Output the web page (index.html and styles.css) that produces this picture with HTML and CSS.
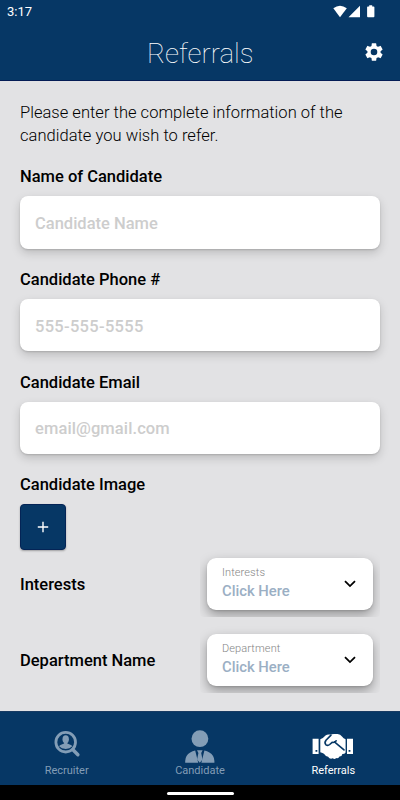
FILE: index.html
```html
<!DOCTYPE html>
<html lang="en">
<head>
<meta charset="utf-8">
<title>Referrals</title>
<link rel="stylesheet" href="styles.css">
</head>
<body>
<div class="app">
  <div class="status">
    <span>3:17</span>
    <svg class="status-icons" width="42" height="14" viewBox="0 0 42 14" fill="#fff"><path d="M0.3 3.2Q7 -1.9 13.8 3.2L7 12.2z"/><path d="M15.5 12.2 27 0.8v11.4z"/><path d="M36.2.2h3v1.3h1.4q.8 0 .8.8v9q0 1-.8 1h-5.6q-.9 0-.9-1v-9q0-.8.8-.8h1.3z"/></svg>
  </div>
  <header class="header">
    <h1>Referrals</h1>
    <svg class="gear" width="22" height="22" viewBox="0 0 24 24" fill="#fff"><path d="M19.14 12.94c.04-.3.06-.61.06-.94s-.02-.64-.07-.94l2.03-1.58a.49.49 0 0 0 .12-.61l-1.92-3.32a.488.488 0 0 0-.59-.22l-2.39.96c-.5-.38-1.03-.7-1.62-.94l-.36-2.54a.484.484 0 0 0-.48-.41h-3.84c-.24 0-.43.17-.47.41l-.36 2.54c-.59.24-1.13.57-1.62.94l-2.39-.96a.48.48 0 0 0-.59.22L2.74 8.87c-.12.21-.08.47.12.61l2.03 1.58c-.05.3-.09.63-.09.94s.02.64.07.94l-2.03 1.58a.49.49 0 0 0-.12.61l1.92 3.32c.12.22.37.29.59.22l2.39-.96c.5.38 1.03.7 1.62.94l.36 2.54c.05.24.24.41.48.41h3.84c.24 0 .44-.17.47-.41l.36-2.54c.59-.24 1.13-.56 1.62-.94l2.39.96c.22.08.47 0 .59-.22l1.92-3.32a.48.48 0 0 0-.12-.61zM12 15.6A3.6 3.6 0 1 1 12 8.4a3.6 3.6 0 0 1 0 7.2z"/></svg>
  </header>
  <main class="form">
    <p class="intro">Please enter the complete information of the candidate you wish to refer.</p>
    <label class="label" for="name">Name of Candidate</label>
    <input class="input" id="name" placeholder="Candidate Name">
    <label class="label" for="phone">Candidate Phone #</label>
    <input class="input phone" id="phone" placeholder="555-555-5555">
    <label class="label" for="email">Candidate Email</label>
    <input class="input email" id="email" placeholder="email@gmail.com">
    <div class="label">Candidate Image</div>
    <button class="add" aria-label="Add"><svg width="12" height="12" viewBox="0 0 12 12" stroke="#fff" stroke-width="1.4"><path d="M6 .8v10.4M.8 6h10.4"/></svg></button>
    <div class="row">
      <span class="row-label">Interests</span>
      <div class="shade"><div class="select">
        <div><div class="hint">Interests</div><div class="value">Click Here</div></div>
        <svg width="12" height="8" viewBox="0 0 12 8" fill="none" stroke="#000" stroke-width="1.8"><path d="M1 1.2l5 4.9 5-4.9"/></svg>
      </div></div>
    </div>
    <div class="row">
      <span class="row-label">Department Name</span>
      <div class="shade"><div class="select">
        <div><div class="hint">Department</div><div class="value">Click Here</div></div>
        <svg width="12" height="8" viewBox="0 0 12 8" fill="none" stroke="#000" stroke-width="1.8"><path d="M1 1.2l5 4.9 5-4.9"/></svg>
      </div></div>
    </div>
  </main>
  <nav class="tabs">
    <div class="tab">
      <svg width="42" height="36" viewBox="0 0 42 36" fill="#839db6"><circle cx="19.7" cy="15.2" r="9.8" fill="none" stroke="#839db6" stroke-width="2.8"/><path d="M26.7 22.5l5.2 5.3" fill="none" stroke="#839db6" stroke-width="3.4" stroke-linecap="round"/><ellipse cx="19.7" cy="12.2" rx="3.2" ry="4"/><path d="M18.1 14h3.2v2.6l3.6 1.3q1.5.6 1.4 1.4-2.4 2.6-6.6 2.6t-6.6-2.6q0-.8 1.4-1.4l3.6-1.3z"/></svg>
      <span>Recruiter</span>
    </div>
    <div class="tab">
      <svg width="42" height="36" viewBox="0 0 42 36" fill="#839db6"><circle cx="20.9" cy="11.7" r="8.4"/><path d="M6.2 35.7V34q.2-6 5-8.6 2.2-1.3 5-1.8l3 12.1zM35.4 35.7V34q-.2-6-5-8.6-2.2-1.3-5-1.8l-3 12.1z"/><path d="M18 23.3h5.6L22.2 26l1.3 6.5-2.7 3.2-2.7-3.2 1.3-6.5z"/></svg>
      <span>Candidate</span>
    </div>
    <div class="tab active">
      <svg width="42" height="36" viewBox="0 0 42 36" fill="#fff"><path fill-rule="evenodd" d="M.6 11.8h6v15.1h-6zM3.5 22.9v1.8h1.8v-1.8zM35 11.8h6v15.1h-6zM36.6 22.9v1.8h1.8v-1.8z"/><path d="M8.3 12.3Q11.5 11 13.5 8.5 15.5 7 18 7.6q1.8-.6 4-.6h3.6q2.8.2 4.4 2.5 1.5 2 3.6 2.7v13.2q-1 1.8-3.2 1.7-.4 2.5-2.9 2.5-1 2.2-3.3 1.4-1.6 1.6-3.4.3-3 1.2-4.7-1.5-2.6-.5-4.2-3-1-.9-3.6-1.5z"/><path d="M19 8.1l-5 5.2q-2 2.7 0 4.5 1.8 1.3 3.7-.3l2.4-2.2q2.5.6 4.1-1.5M22.4 14.8l9.6 8.1" fill="none" stroke="#063765" stroke-width="1.6" stroke-linecap="round"/></svg>
      <span>Referrals</span>
    </div>
  </nav>
  <div class="home"><div class="pill"></div></div>
</div>
</body>
</html>
```
FILE: styles.css
```css
* { box-sizing: border-box; }
body { margin: 0; font-family: Roboto, sans-serif; color: #000; }
.app { width: 400px; height: 800px; display: flex; flex-direction: column; overflow: hidden; background: #e2e2e4; }
.status { height: 24px; flex: none; background: #063765; color: #fff; display: flex; justify-content: space-between; padding: 0 25px 0 7px; font-size: 13px; line-height: 24px; }
.status-icons { margin-top: 5px; }
.header { height: 57px; flex: none; background: #063765; border-bottom: 1px solid #041c55; display: grid; grid-template-columns: 1fr 106px 1fr; align-items: center; }
.header h1 { grid-column: 2; margin: 3px 0 0; font-size: 27.7px; line-height: 36px; font-weight: 100; color: #fff; white-space: nowrap; }
.gear { justify-self: end; margin-right: 15px; }
.form { flex: 1; min-height: 0; padding: 20px 20px 0; }
.intro { margin: 0; font-size: 16.5px; line-height: 23px; font-weight: 300; letter-spacing: .03px; }
.label { display: block; font-size: 16.5px; font-weight: 500; line-height: 20px; margin: 20.4px 0 9px; }
.input { display: block; width: 100%; height: 52.5px; border: 0; border-radius: 8px; padding: 2px 15px 0; background: #fff; font: 500 16.5px Roboto, sans-serif; box-shadow: 0 4px 10px rgba(0,0,0,.17), 0 1px 2px rgba(0,0,0,.14); margin-bottom: 21.1px; }
.input::placeholder { color: #cdcdcd; opacity: 1; }
.phone { letter-spacing: .3px; }
.email { letter-spacing: .1px; }
.add { display: flex; align-items: center; justify-content: center; width: 46px; height: 46px; border: 1px solid #042456; border-radius: 4px; background: #063765; box-shadow: 0 1px 2px rgba(0,0,0,.3); padding: 0; }
.row { display: flex; align-items: flex-start; justify-content: space-between; height: 75.7px; }
.row-label { font-size: 16.5px; font-weight: 500; line-height: 20px; margin-top: 25px; }
.shade { width: 180px; height: 67px; padding: 8px 7px 7px; overflow: hidden; border-radius: 4px; }
.select { width: 166px; height: 52px; border-radius: 9px; background: #fff; display: flex; align-items: center; justify-content: space-between; padding: 0 17px 0 15px; box-shadow: 0 5px 12px rgba(0,0,0,.34), 0 1px 2px rgba(0,0,0,.12); }
.hint { font-size: 11px; line-height: 14px; color: #858585; font-weight: 300; letter-spacing: .1px; }
.value { font-size: 14.8px; line-height: 22px; color: #9bafc4; font-weight: 500; }
.tabs { height: 74px; flex: none; background: #063765; border-top: 1px solid #173a62; display: grid; grid-template-columns: repeat(3, 1fr); }
.tab { display: flex; flex-direction: column; align-items: center; gap: 1px; padding-top: 15px; color: #839db6; font-size: 11px; line-height: 14px; }
.active { color: #fff; }
.home { height: 15px; flex: none; background: #000; display: flex; justify-content: center; padding-top: 7px; }
.pill { width: 67px; height: 3px; border-radius: 2px; background: #fff; }
```
